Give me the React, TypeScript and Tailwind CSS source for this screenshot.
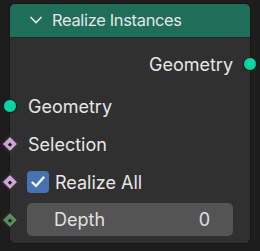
import React from 'react';

const Circle: React.FC<{ side: 'left' | 'right' }> = ({ side }) => (
  <span
    className={`absolute top-1/2 -translate-y-1/2 h-[14px] w-[14px] rounded-full bg-[#00d6a3] border border-[#161616] ${
      side === 'left' ? 'left-[-7px]' : 'right-[-7px]'
    }`}
  />
);

const Diamond: React.FC<{ color: string }> = ({ color }) => (
  <span className="absolute left-[-6px] top-1/2 -translate-y-1/2 flex h-[12px] w-[12px] rotate-45 items-center justify-center border border-[#161616]" style={{ backgroundColor: color }}>
    <span className="h-[3px] w-[3px] bg-[#1a1a1a]" />
  </span>
);

export default function App() {
  return (
    <div className="h-[251px] w-[260px] bg-[#1d1d1d] pt-[3px] pl-[9px]" style={{ fontFamily: 'Inter, "Noto Sans", sans-serif' }}>
      <div className="relative flex h-[241px] w-[242px] flex-col rounded-[6px] border border-[#161616] bg-[#303030]">
        <div className="flex h-[34px] items-center gap-[9px] rounded-t-[5px] border-b border-[#1f2a26] bg-[#1e6e5a] pl-[19px] text-[16.4px] tracking-[-0.3px] text-[#e6e6e6]">
          <svg width="14" height="10" viewBox="0 0 14 10" className="mt-[-2px]">
            <path d="M1.5 2 L7 7.5 L12.5 2" fill="none" stroke="#e6e6e6" strokeWidth="1.6" />
          </svg>
          <span>Realize Instances</span>
        </div>

        <div className="relative mt-[7px] flex h-[38px] items-center justify-end pr-[17px] text-[18px] text-[#e6e6e6]">
          Geometry
          <Circle side="right" />
        </div>

        <div className="relative mt-[4px] flex h-[38px] items-center pl-[18px] text-[18px] text-[#e6e6e6]">
          <Circle side="left" />
          Geometry
        </div>

        <div className="relative flex h-[38px] items-center pl-[18px] text-[18px] text-[#e6e6e6]">
          <Diamond color="#cca6d6" />
          Selection
        </div>

        <div className="relative flex h-[38px] items-center gap-[6px] pl-[17px] text-[18px] text-[#e6e6e6]">
          <Diamond color="#cca6d6" />
          <span className="flex h-[22px] w-[22px] items-center justify-center rounded-[4px] bg-[#4772b3]">
            <svg width="16" height="14" viewBox="0 0 16 14">
              <path d="M2.5 7.5 L6 11 L13.5 2.5" fill="none" stroke="#ffffff" strokeWidth="2.4" strokeLinecap="round" strokeLinejoin="round" />
            </svg>
          </span>
          Realize All
        </div>

        <div className="relative flex h-[37px] items-center pl-[17px] pr-[17px]">
          <Diamond color="#598c5c" />
          <div className="flex h-[33px] w-full items-center justify-between rounded-[5px] bg-[#545454] pl-[27px] pr-[23px] text-[18px] text-[#e0e0e0]">
            <span>Depth</span>
            <span>0</span>
          </div>
        </div>
      </div>
    </div>
  );
}
